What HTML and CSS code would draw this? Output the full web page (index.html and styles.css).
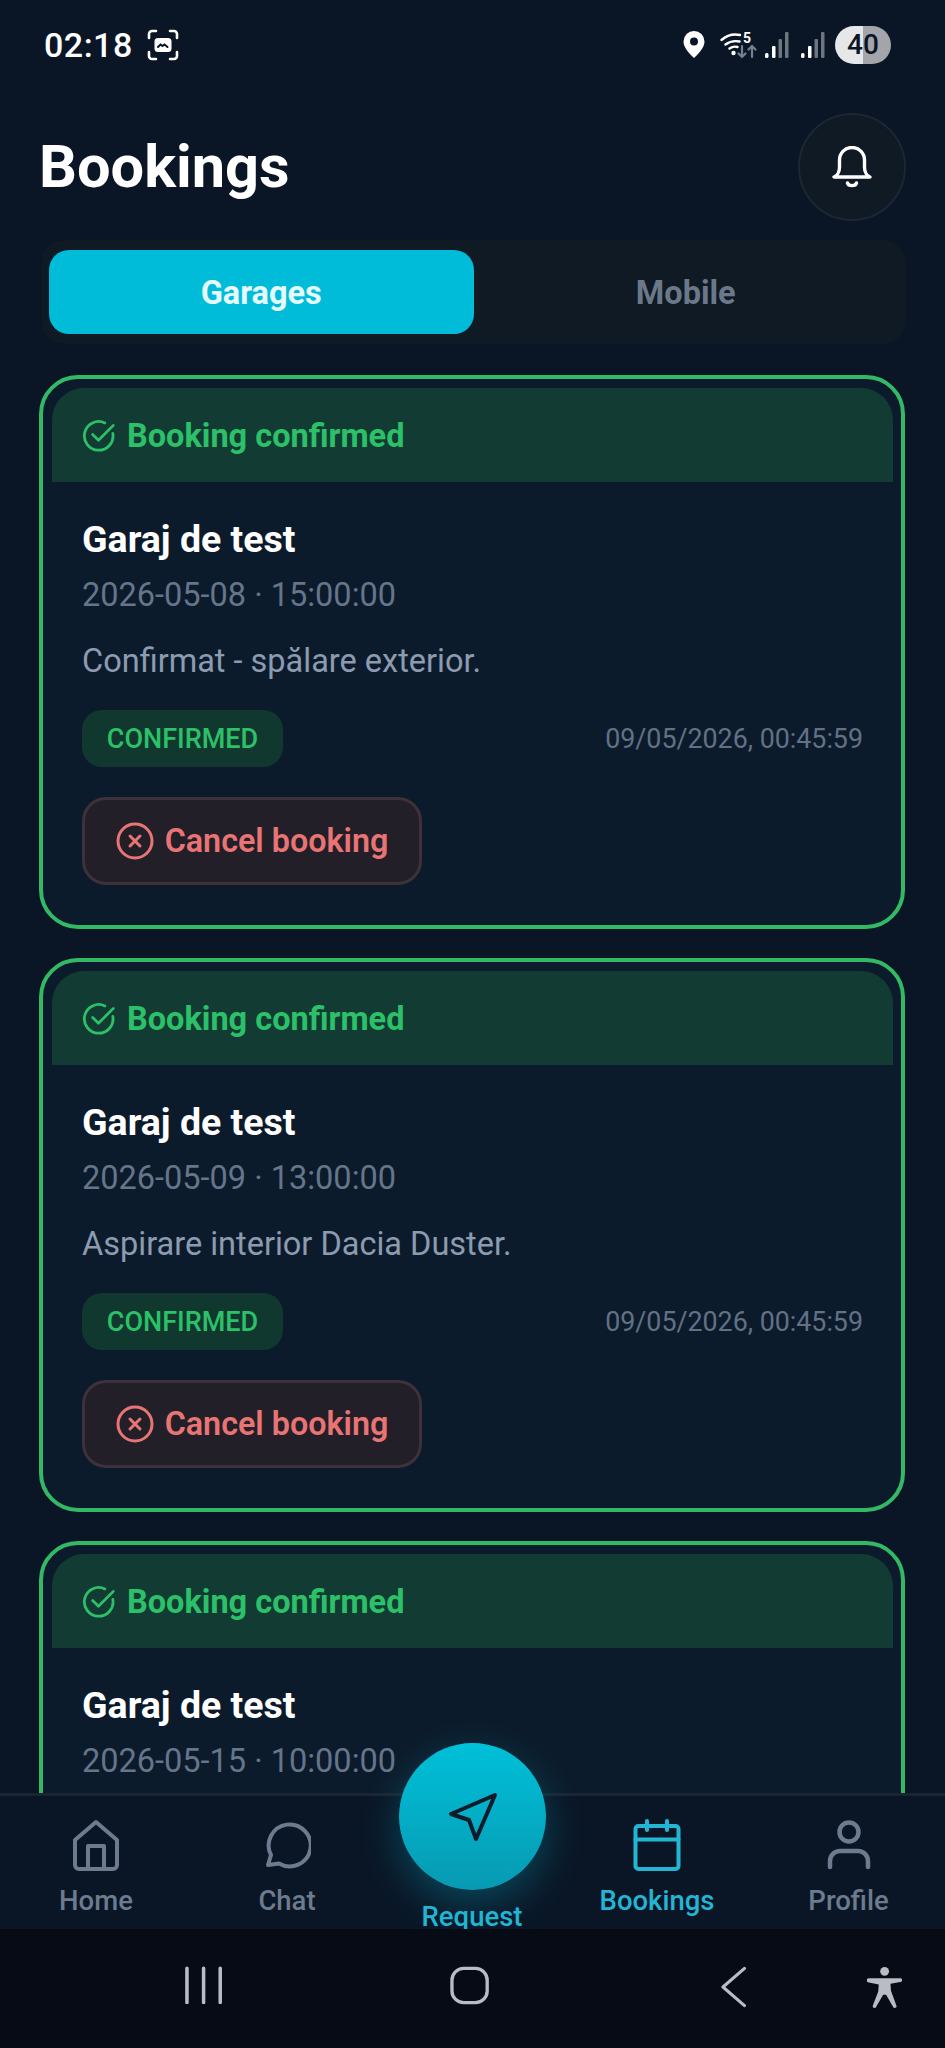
FILE: index.html
```html
<!DOCTYPE html>
<html lang="en">
<head>
    <meta charset="UTF-8">
    <meta name="viewport" content="width=device-width, initial-scale=1.0">
    <title>Bookings</title>
    <link rel="stylesheet" href="styles.css">
</head>
<body>
<svg class="defs" width="0" height="0">
    <symbol id="check" viewBox="0 0 32 32">
        <path d="M29 13.500A13.500 13.500 0 1 1 21.500 3.700" fill="none" stroke="currentColor" stroke-width="2.600" stroke-linecap="round"/>
        <path d="M10 14.500l5.500 5.500L29.500 6" fill="none" stroke="currentColor" stroke-width="2.600" stroke-linecap="round" stroke-linejoin="round"/>
    </symbol>
    <symbol id="cancel" viewBox="0 0 38 38">
        <circle cx="19" cy="19" r="17" fill="none" stroke="currentColor" stroke-width="3"/>
        <path d="M14 14l10 10M24 14l-10 10" fill="none" stroke="currentColor" stroke-width="3" stroke-linecap="round"/>
    </symbol>
</svg>

<div class="status-bar">
    <div class="status-left">
        <span class="time">02:18</span>
        <svg class="capture" viewBox="0 0 32 32" width="32" height="32" fill="none" stroke="#fff" stroke-width="2.600" stroke-linecap="round">
            <path d="M2 9V5a3 3 0 0 1 3-3h4M23 2h4a3 3 0 0 1 3 3v4M30 23v4a3 3 0 0 1-3 3h-4M9 30H5a3 3 0 0 1-3-3v-4"/>
            <rect x="7.500" y="9" width="17" height="14" rx="3.500" fill="#fff" stroke="none"/>
            <path d="M11 18l2.500-2.500 2 1.500 2-1.500 3 2.500" stroke="#0a1526" stroke-width="2"/>
        </svg>
    </div>
    <div class="status-right">
        <svg class="pin" viewBox="0 0 22 27" width="22" height="27">
            <path fill-rule="evenodd" fill="#fff" d="M11 0a10.500 10.500 0 0 1 10.500 10.500C21.500 17 15 23 11 27 7 23 .5 17 .5 10.500A10.500 10.500 0 0 1 11 0zm0 6.500a4 4 0 1 0 0 8 4 4 0 0 0 0-8z"/>
        </svg>
        <svg class="wifi" viewBox="0 0 37 36" width="37" height="36" fill="none" stroke-linecap="round">
            <path d="M1.500 13C6 9 13 6.500 20 8M5.500 17.500c4-3 9-4 14-3M9.500 21.500c2.500-1.800 5.500-2.300 8-1.500" stroke="#fff" stroke-width="2.400"/>
            <circle cx="13.500" cy="26" r="2.200" fill="#fff"/>
            <text x="23" y="16" class="wifi-five">5</text>
            <path d="M22 19v11M18.500 26.500l3.500 3.500 3.500-3.500" stroke="#77808c" stroke-width="2.200"/>
            <path d="M32 30V19M28.500 22.500L32 19l3.500 3.500" stroke="#77808c" stroke-width="2.200"/>
        </svg>
        <svg class="signal" viewBox="0 0 24 26" width="24" height="26">
            <rect x="0" y="21" width="3.500" height="5" rx="1.500" fill="#fff"/>
            <rect x="7" y="14" width="3.500" height="12" rx="1" fill="#fff"/>
            <rect x="13.500" y="7" width="3.500" height="19" rx="1" fill="#6d7580"/>
            <rect x="20" y="0" width="3.500" height="26" rx="1" fill="#6d7580"/>
        </svg>
        <svg class="signal two" viewBox="0 0 24 26" width="24" height="26">
            <rect x="0" y="21" width="3.500" height="5" rx="1.500" fill="#fff"/>
            <rect x="7" y="14" width="3.500" height="12" rx="1" fill="#fff"/>
            <rect x="13.500" y="7" width="3.500" height="19" rx="1" fill="#6d7580"/>
            <rect x="20" y="0" width="3.500" height="26" rx="1" fill="#6d7580"/>
        </svg>
        <span class="battery">40</span>
    </div>
</div>

<header class="top">
    <h1>Bookings</h1>
    <button class="bell" type="button" aria-label="Notifications">
        <svg viewBox="0 0 40 42" width="40" height="42" fill="none" stroke="#fff" stroke-width="3.400" stroke-linecap="round" stroke-linejoin="round">
            <path d="M2 31h36c-3-1-5.500-5-5.500-10v-7a12.500 12.500 0 0 0-25 0v7c0 5-2.500 9-5.500 10z"/>
            <path d="M15.500 37c1 3.500 8 3.500 9 0"/>
        </svg>
    </button>
</header>

<div class="tabs">
    <div class="tab active">Garages</div>
    <div class="tab">Mobile</div>
</div>

<main class="list">
    <section class="card">
        <div class="card-head">
            <svg class="head-icon"><use href="#check"/></svg>
            <span>Booking confirmed</span>
        </div>
        <div class="card-body">
            <h2>Garaj de test</h2>
            <p class="when">2026-05-08 · 15:00:00</p>
            <p class="note">Confirmat - spălare exterior.</p>
            <div class="meta">
                <span class="badge">CONFIRMED</span>
                <span class="stamp">09/05/2026, 00:45:59</span>
            </div>
            <button class="cancel" type="button">
                <svg class="cancel-icon"><use href="#cancel"/></svg>
                Cancel booking
            </button>
        </div>
    </section>

    <section class="card">
        <div class="card-head">
            <svg class="head-icon"><use href="#check"/></svg>
            <span>Booking confirmed</span>
        </div>
        <div class="card-body">
            <h2>Garaj de test</h2>
            <p class="when">2026-05-09 · 13:00:00</p>
            <p class="note">Aspirare interior Dacia Duster.</p>
            <div class="meta">
                <span class="badge">CONFIRMED</span>
                <span class="stamp">09/05/2026, 00:45:59</span>
            </div>
            <button class="cancel" type="button">
                <svg class="cancel-icon"><use href="#cancel"/></svg>
                Cancel booking
            </button>
        </div>
    </section>

    <!-- runs under the nav, rest of it is scrolled off -->
    <section class="card cut-off">
        <div class="card-head">
            <svg class="head-icon"><use href="#check"/></svg>
            <span>Booking confirmed</span>
        </div>
        <div class="card-body">
            <h2>Garaj de test</h2>
            <p class="when">2026-05-15 · 10:00:00</p>
        </div>
    </section>
</main>

<nav class="bottom-nav">
    <a class="nav-item">
        <svg viewBox="0 0 48 52" width="48" height="52" fill="none" stroke="currentColor" stroke-width="4" stroke-linejoin="round">
            <path d="M3 21L24 3l21 18v25a4 4 0 0 1-4 4H7a4 4 0 0 1-4-4z"/>
            <path d="M16 50V27h16v23"/>
        </svg>
        <span>Home</span>
    </a>
    <a class="nav-item">
        <svg viewBox="0 0 48 52" width="48" height="52" fill="none" stroke="currentColor" stroke-width="4" stroke-linejoin="round">
            <path d="M5 46l3-10A21 21 0 1 1 16 44.500z"/>
        </svg>
        <span>Chat</span>
    </a>
    <div class="nav-item request">
        <div class="fab">
            <svg viewBox="0 0 50 50" width="50" height="50" fill="none" stroke="#0d1b2a" stroke-width="4" stroke-linejoin="round">
                <path d="M3 22L47 3 28 47l-7-19z"/>
            </svg>
        </div>
        <span>Request</span>
    </div>
    <a class="nav-item current">
        <svg viewBox="0 0 48 52" width="48" height="52" fill="none" stroke="currentColor" stroke-width="4" stroke-linecap="round" stroke-linejoin="round">
            <rect x="2.500" y="7" width="43" height="43" rx="3"/>
            <path d="M2.500 20.500h43M14 2v9M34 2v9"/>
        </svg>
        <span>Bookings</span>
    </a>
    <a class="nav-item">
        <svg viewBox="0 0 48 52" width="48" height="52" fill="none" stroke="currentColor" stroke-width="4.500" stroke-linecap="round">
            <circle cx="24" cy="13" r="9.500"/>
            <path d="M5 48v-6a10 10 0 0 1 10-10h18a10 10 0 0 1 10 10v6"/>
        </svg>
        <span>Profile</span>
    </a>
</nav>

<div class="system-nav">
    <svg viewBox="0 0 38 38" width="38" height="38" class="sys-recent" stroke="#b9bcc4" stroke-width="3.600" stroke-linecap="round">
        <path d="M2 2v35M19 2v35M36 2v35"/>
    </svg>
    <svg viewBox="0 0 40 40" width="40" height="40" class="sys-home" fill="none" stroke="#b9bcc4" stroke-width="3.400">
        <rect x="2" y="2" width="36" height="35" rx="12"/>
    </svg>
    <svg viewBox="0 0 26 42" width="26" height="42" class="sys-back" fill="none" stroke="#b9bcc4" stroke-width="3.200" stroke-linecap="round" stroke-linejoin="round">
        <path d="M24 2L2 21l22 19"/>
    </svg>
    <svg viewBox="0 0 36 42" width="36" height="42" class="sys-access" fill="#b9bcc4">
        <circle cx="18" cy="5" r="4.500"/>
        <path d="M2 12h32a1.600 1.600 0 0 1 0 3.800l-10 2 .5 7L30 40a1.800 1.800 0 0 1-3.400 1.200L19.500 29h-3L9.400 41.200A1.800 1.800 0 0 1 6 40l5.500-14.500.5-7-10-2A1.600 1.600 0 0 1 2 12z"/>
    </svg>
</div>
</body>
</html>
```

FILE: styles.css
```css
* {
    box-sizing: border-box;
}

body {
    margin: 0;
    width: 945px;
    height: 2048px;
    overflow: hidden;
    display: flex;
    flex-direction: column;
    background-color: #0a1526;
    font-family: 'Roboto', 'Liberation Sans', sans-serif;
    color: #fff;
}

.defs {
    position: absolute;
}

/* status bar */
.status-bar {
    height: 89px;
    padding: 0 54px 0 44px;
    display: flex;
    justify-content: space-between;
    align-items: center;
    flex-shrink: 0;
}

.status-left {
    display: flex;
    align-items: center;
    gap: 14px;
}

.time {
    font-size: 34px;
    font-weight: 500;
    letter-spacing: 0.5px;
}

.status-right {
    display: flex;
    align-items: center;
}

.pin {
    margin-right: 15px;
}

.wifi {
    margin-right: 8px;
}

.wifi-five {
    font-size: 14px;
    font-weight: 700;
    fill: #fff;
}

.signal {
    margin-right: 12px;
}

.signal.two {
    margin-right: 10px;
}

.battery {
    width: 56px;
    height: 38px;
    border-radius: 19px;
    display: flex;
    align-items: center;
    justify-content: center;
    font-size: 28px;
    font-weight: 500;
    color: #0a1526;
    background: linear-gradient(90deg, #e6e7e9 0 50%, #a3a5aa 50% 100%);
}

/* header */
.top {
    height: 151px;
    padding: 5px 39px 0 39px;
    display: flex;
    justify-content: space-between;
    align-items: center;
    flex-shrink: 0;
}

h1 {
    margin: 0;
    font-size: 59.5px;
    font-weight: 700;
}

.bell {
    width: 108px;
    height: 108px;
    padding: 0;
    border: 2px solid #1b2733;
    border-radius: 50%;
    background-color: #0f1a25;
    display: flex;
    align-items: center;
    justify-content: center;
}

/* tabs */
.tabs {
    margin: 0 39px 0 41px;
    padding: 10px 8px;
    height: 104px;
    border-radius: 24px;
    background-color: #0f1a24;
    display: flex;
    flex-shrink: 0;
}

.tab {
    flex: 1;
    padding-top: 2px;
    border-radius: 20px;
    display: flex;
    align-items: center;
    justify-content: center;
    font-size: 32.5px;
    font-weight: 700;
    color: #6b7889;
}

.tab.active {
    background-color: #00bcd8;
    color: #e6fbff;
}

/* booking cards */
.list {
    flex: 1;
    min-height: 0;
    overflow: hidden;
    padding: 31px 40px 0 39px;
    display: flex;
    flex-direction: column;
    gap: 29px;
}

.card {
    flex-shrink: 0;
    padding: 9px 8px 9px 9px;
    border: 4px solid #33b864;
    border-radius: 39px;
    background-color: #0c1b2b;
}

.card.cut-off {
    height: 420px;
}

.card-head {
    height: 94px;
    padding: 2px 30px 0;
    border-radius: 32px 32px 0 0;
    background-color: #123c33;
    display: flex;
    align-items: center;
    gap: 11px;
    font-size: 32.5px;
    font-weight: 700;
    color: #2cc168;
}

.head-icon {
    width: 34px;
    height: 34px;
    flex-shrink: 0;
}

.card-body {
    padding: 36px 30px 31px 30px;
}

h2 {
    margin: 0;
    font-size: 37.5px;
    line-height: 42px;
    font-weight: 700;
}

.when {
    margin: 16px 0 0;
    font-size: 32.5px;
    line-height: 38px;
    color: #65758a;
}

.note {
    margin: 28px 0 0;
    font-size: 32.5px;
    line-height: 38px;
    color: #8c9bb0;
}

.meta {
    margin-top: 30px;
    display: flex;
    align-items: center;
    justify-content: space-between;
}

.badge {
    height: 57px;
    width: 201px;
    border-radius: 20px;
    background-color: #11382f;
    display: flex;
    align-items: center;
    justify-content: center;
    font-size: 27px;
    font-weight: 500;
    color: #2cc168;
}

.stamp {
    font-size: 26.8px;
    color: #627185;
}

.cancel {
    margin-top: 30px;
    height: 88px;
    width: 340px;
    padding: 0;
    border: 3px solid #3e3139;
    border-radius: 24px;
    background-color: #221f29;
    display: flex;
    align-items: center;
    justify-content: center;
    gap: 11px;
    font-family: inherit;
    font-size: 32.3px;
    font-weight: 600;
    color: #e87474;
}

.cancel-icon {
    width: 38px;
    height: 38px;
    flex-shrink: 0;
}

/* bottom nav */
.bottom-nav {
    position: relative;
    height: 136px;
    flex-shrink: 0;
    border-top: 3px solid #1a2532;
    background-color: #0a1626;
    display: grid;
    grid-template-columns: 192px 190px 180px 190px 193px;
}

.nav-item {
    padding-top: 23px;
    display: flex;
    flex-direction: column;
    align-items: center;
    gap: 15px;
    font-size: 27.5px;
    font-weight: 500;
    color: #6d7b8e;
}

.nav-item.current {
    color: #22b6d4;
}

.nav-item span {
    line-height: 30px;
}

.request {
    padding-top: 106px;
    color: #22b6d4;
}

.fab {
    position: absolute;
    left: 399px;
    top: -53px;
    width: 147px;
    height: 147px;
    border-radius: 50%;
    background: linear-gradient(180deg, #00c0d9, #079ab2);
    box-shadow: 0 14px 40px rgba(0, 188, 216, 0.3);
    display: flex;
    align-items: center;
    justify-content: center;
}

/* android nav */
.system-nav {
    position: relative;
    height: 119px;
    flex-shrink: 0;
    background-color: #060b15;
    padding: 37px 43px 0 185px;
    display: flex;
    align-items: flex-start;
}

.sys-home {
    margin-left: 228px;
}

.sys-back {
    margin-left: 232px;
}

.sys-access {
    margin-left: 120px;
}
```
